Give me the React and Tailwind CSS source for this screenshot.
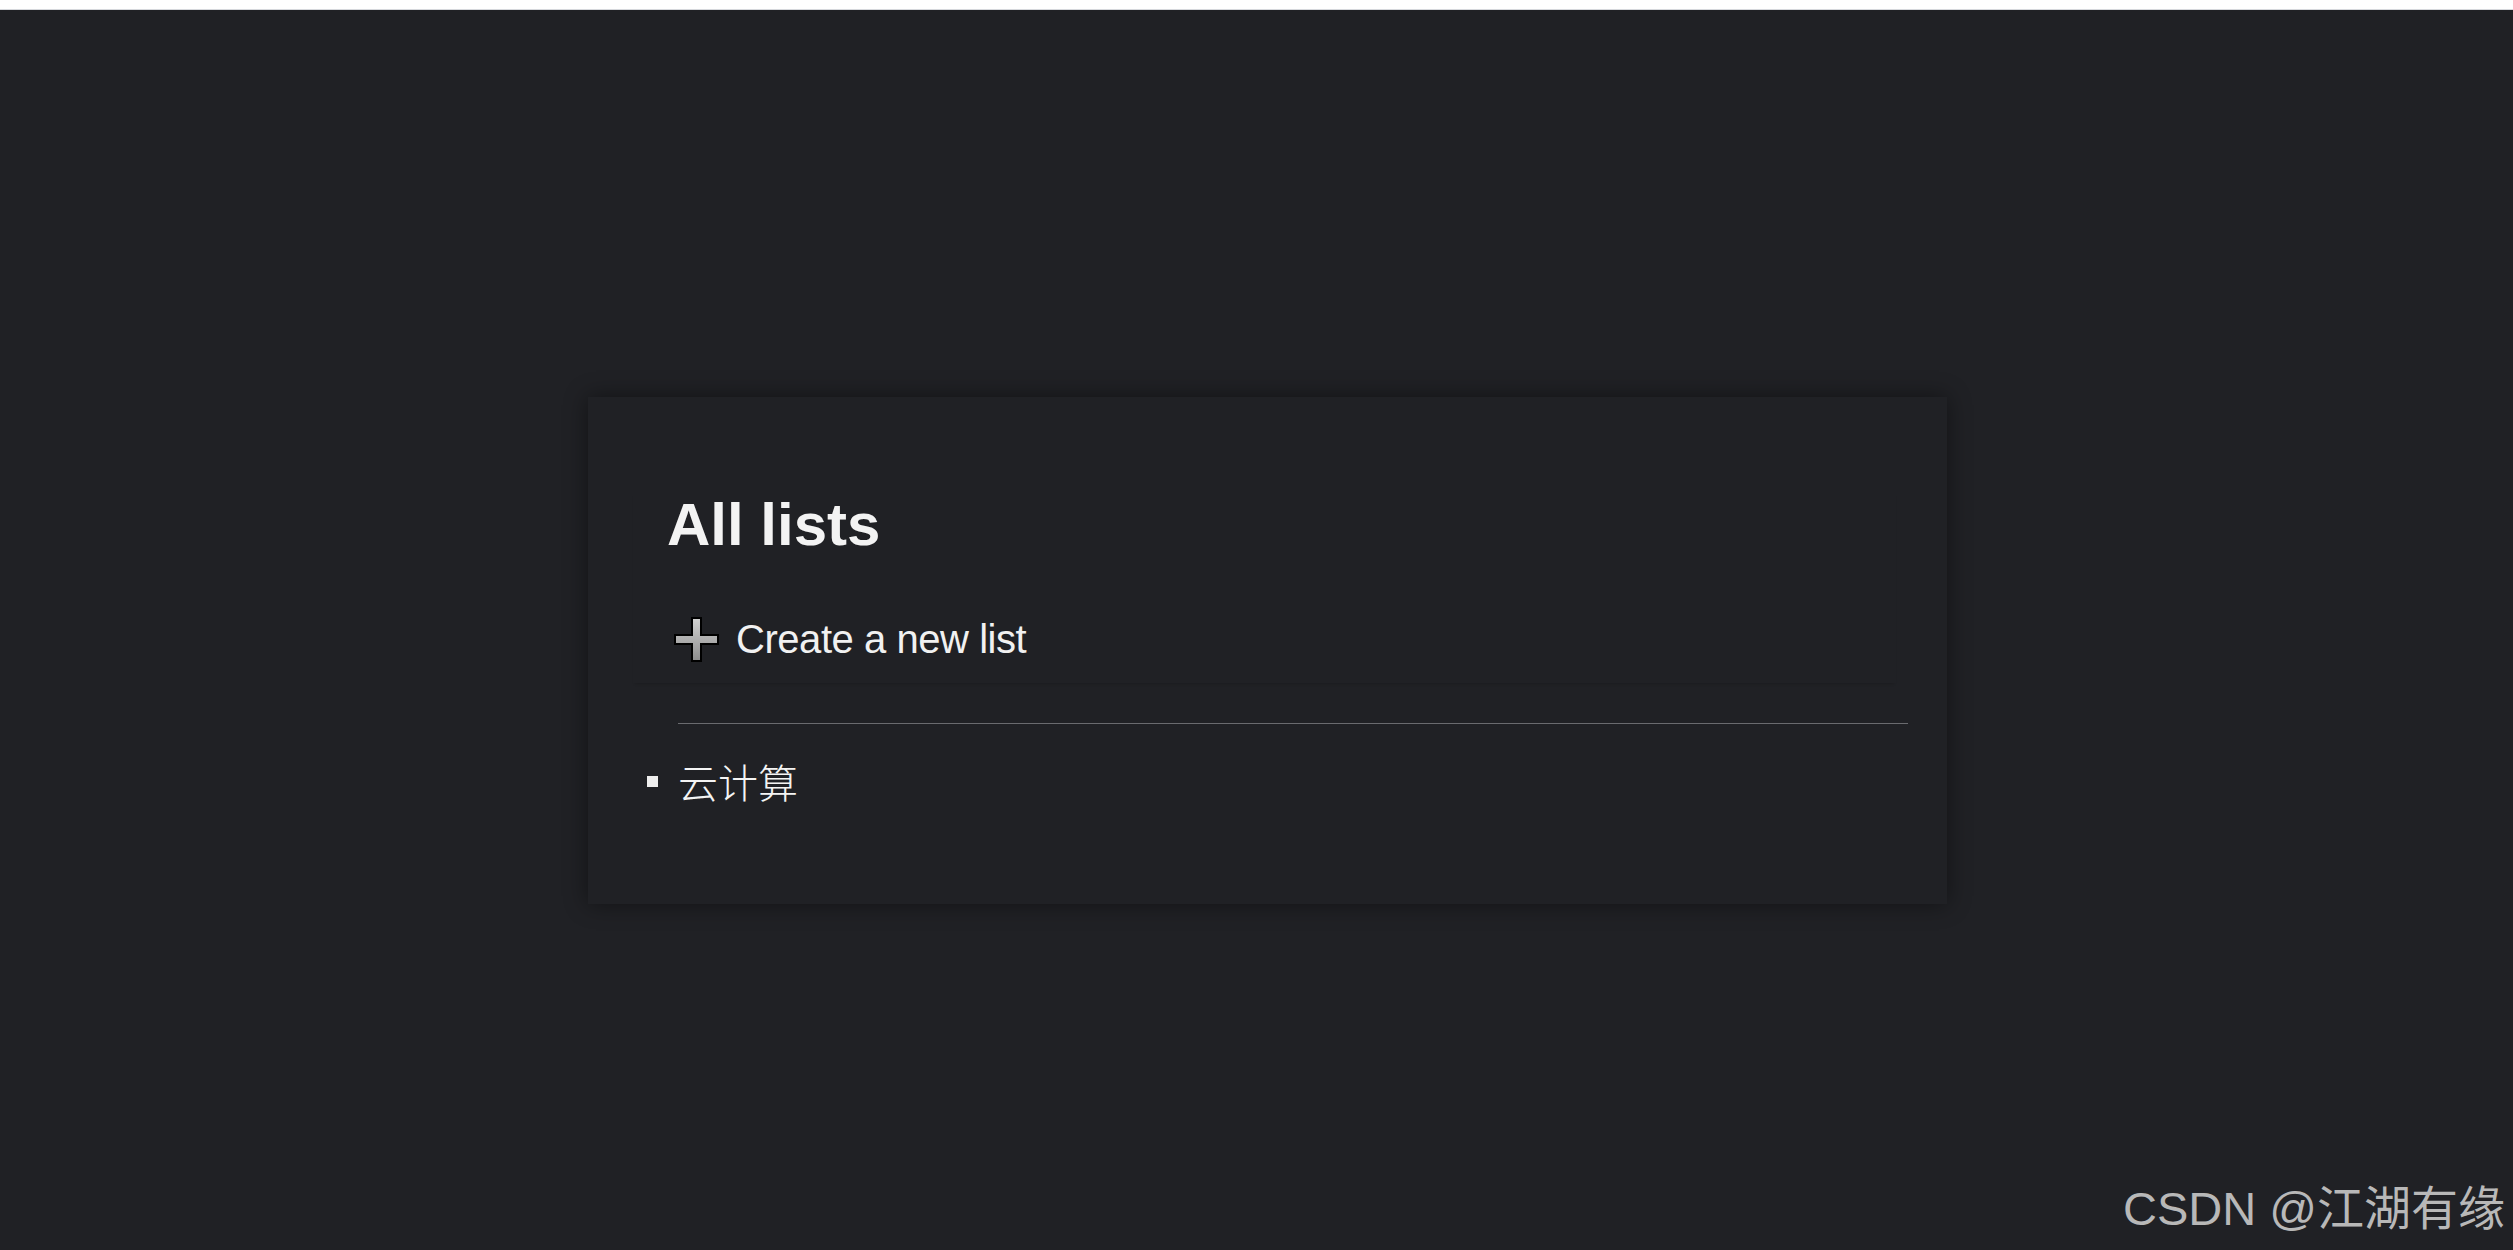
import React from 'react';

// Plus icon: grey bar cross with a black outline
function PlusIcon() {
  return (
    <svg width="45" height="45" viewBox="0 0 45 45" className="shrink-0">
      <defs>
        <linearGradient id="plusFill" x1="0" y1="0" x2="0" y2="1">
          <stop offset="0%" stopColor="#d2d2d2" />
          <stop offset="100%" stopColor="#8c8c8c" />
        </linearGradient>
      </defs>
      <path
        d="M18 1 H27 V18 H44 V27 H27 V44 H18 V27 H1 V18 H18 Z"
        fill="url(#plusFill)"
        stroke="#000"
        strokeWidth="2"
      />
    </svg>
  );
}

export default function App() {
  const lists = ['云计算'];

  return (
    <div
      className="relative h-[1250px] w-full overflow-hidden bg-[#202125] text-[#f1f1f1]"
      style={{ fontFamily: '"Liberation Sans", Arial, "Noto Sans CJK SC", sans-serif' }}
    >
      {/* Barre blanche en haut */}
      <div className="h-[10px] bg-white border-b border-[#d6d8dc]" />

      <div className="pt-[387px] pl-[588px]">
        <div className="w-[1359px] bg-[#202125] shadow-[0_0_22px_rgba(0,0,0,0.45)] pt-[94px] pb-[99px]">
          {/* En-tête */}
          <div className="ml-[45px] w-[1263px] pl-[34px] pb-[21px] bg-[#202125] shadow-[0_3px_3px_-2px_rgba(0,0,0,0.16)]">
            <h1 className="text-[60px] font-bold leading-[68px] text-[#f3f3f3]">All lists</h1>
            <button className="mt-[57px] flex items-center gap-[17px] h-[46px] ml-[7px] text-[40px] leading-[46px] text-[#f1f1f1]">
              <PlusIcon />
              <span className="tracking-[-0.45px]">Create a new list</span>
            </button>
          </div>

          <div className="ml-[90px] w-[1230px] mt-[40px] border-t border-[#6a6b6f]" />

          <ul className="mt-[33px]">
            {lists.map((name) => (
              <li key={name} className="flex items-center h-[48px] pl-[59px]">
                <span className="w-[11px] h-[11px] bg-[#eeeeee] shrink-0" />
                <span
                  className="ml-[20px] text-[40px] leading-[48px] text-[#f4f4f4]"
                  style={{ fontFamily: '"Noto Sans CJK SC", sans-serif', fontWeight: 300 }}
                >
                  {name}
                </span>
              </li>
            ))}
          </ul>
        </div>
      </div>

      {/* Filigrane */}
      <div
        className="absolute right-[8px] bottom-[14px] text-[47px] leading-[54px] text-[#b8b8b8]"
        style={{ fontFamily: '"Liberation Sans", "Noto Sans CJK SC", sans-serif' }}
      >
        CSDN @江湖有缘
      </div>
    </div>
  );
}
